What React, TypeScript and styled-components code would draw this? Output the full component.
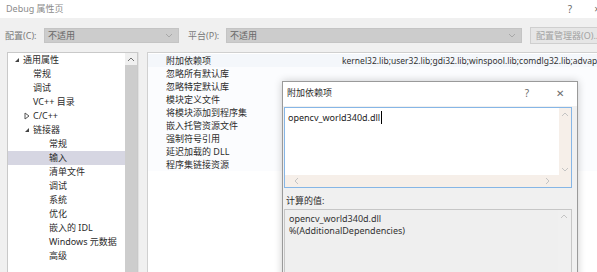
import React from 'react';
import styled, { createGlobalStyle } from 'styled-components';

const GlobalStyle = createGlobalStyle`
  html, body { margin: 0; padding: 0; overflow: hidden; background: #f0f0f0; }
  body { font-family: "Noto Sans", "Noto Sans CJK SC", sans-serif; }
`;

const Window = styled.div`
  position: relative;
  width: 597px;
  height: 272px;
  overflow: hidden;
  background: #f0f0f0;
  display: flex;
  flex-direction: column;
`;

const TitleBar = styled.div`
  height: 18px;
  flex: none;
  display: flex;
  align-items: center;
  background: #ffffff;
  padding-left: 6px;
  margin-right: -13px;
  font-size: 9px;
  line-height: 12px;
  color: #8c8c8c;
`;

const TitleText = styled.span`
  flex: 1;
  min-width: 0;
  white-space: nowrap;
`;

const TitleBtn = styled.span<{ $w: number }>`
  width: ${p => p.$w}px;
  flex: none;
  text-align: center;
  font-size: 10px;
  color: #6b6b6b;
`;

const ConfigRow = styled.div`
  margin-top: 10px;
  height: 15px;
  flex: none;
  display: flex;
  align-items: center;
  padding-left: 5px;
`;

const FieldLabel = styled.span<{ $w: number }>`
  width: ${p => p.$w}px;
  flex: none;
  font-size: 9px;
  line-height: 12px;
  color: #7a7a7a;
  white-space: nowrap;
`;

const Combo = styled.div<{ $w: number; $gap: number }>`
  width: ${p => p.$w}px;
  margin-right: ${p => p.$gap}px;
  height: 15px;
  flex: none;
  box-sizing: border-box;
  background: #cccccc;
  border: 1px solid #c4c4c4;
  display: flex;
  align-items: center;
  padding: 0 5px 0 3px;
  font-size: 9px;
  line-height: 12px;
  color: #666666;
  justify-content: space-between;
`;

const ManagerBtn = styled.div`
  flex: none;
  width: 80px;
  height: 17px;
  box-sizing: border-box;
  border: 1px solid #cfcfcf;
  background: #e6e6e6;
  font-size: 9px;
  line-height: 12px;
  color: #a2a2a2;
  display: flex;
  align-items: center;
  padding-left: 5px;
  white-space: nowrap;
`;

const Main = styled.div`
  flex: 1;
  display: flex;
  margin-top: 9px;
  padding-left: 7px;
  min-height: 0;
`;

const TreePanel = styled.div`
  width: 131px;
  flex: none;
  box-sizing: border-box;
  border: 1px solid #c9c9c9;
  border-bottom: none;
  background: #ffffff;
  display: flex;
`;

const TreeList = styled.div`
  flex: 1;
  min-width: 0;
  overflow: hidden;
  display: flex;
  flex-direction: column;
`;

const TreeRow = styled.div<{ $indent: number; $selected?: boolean }>`
  height: 14px;
  flex: none;
  display: flex;
  align-items: center;
  padding-left: ${p => p.$indent}px;
  background: ${p => (p.$selected ? '#d6d6e2' : 'transparent')};
  font-size: 9px;
  line-height: 14px;
  color: #2b2b2b;
  white-space: nowrap;
`;

const Arrow = styled.span`
  width: 8px;
  display: inline-flex;
  align-items: center;
  margin-left: -9px;
  margin-right: 1px;
`;

const VScroll = styled.div<{ $track: string }>`
  width: 12px;
  flex: none;
  display: flex;
  flex-direction: column;
  background: ${p => p.$track};
`;

const ScrollBtn = styled.div`
  height: 12px;
  flex: none;
  display: flex;
  align-items: center;
  justify-content: center;
`;

const Thumb = styled.div`
  flex: 1;
  background: #cdcdcd;
`;

const ScrollFill = styled.div`
  flex: 1;
`;

const Gap = styled.div`
  width: 9px;
  flex: none;
  border-left: 1px solid #e2e2e2;
  box-sizing: border-box;
`;

const PropPanel = styled.div`
  flex: 1;
  box-sizing: border-box;
  border: 1px solid #d0d0d0;
  border-bottom: none;
  border-right: none;
  background: #ffffff;
  padding-top: 1px;
`;

const PropRow = styled.div<{ $tint?: boolean }>`
  height: 13px;
  display: grid;
  grid-template-columns: 194px 1fr;
  align-items: center;
  background: ${p => (p.$tint ? '#f4f7fb' : '#fbfcfe')};
`;

const PropName = styled.span`
  padding-left: 18px;
  font-size: 9px;
  line-height: 13px;
  color: #2b2b2b;
  white-space: nowrap;
`;

const PropValue = styled.span`
  font-size: 8.5px;
  line-height: 13px;
  color: #333;
  white-space: nowrap;
  overflow: hidden;
`;

const Dialog = styled.div`
  position: absolute;
  left: 282px;
  top: 81px;
  width: 296px;
  height: 210px;
  box-sizing: border-box;
  border: 1px solid #9a9a9a;
  background: #f0f0f0;
  box-shadow: 0 0 8px rgba(0, 0, 0, 0.2);
  display: flex;
  flex-direction: column;
`;

const DialogTitle = styled.div`
  height: 24px;
  flex: none;
  display: flex;
  align-items: center;
  background: #ffffff;
  padding-left: 4px;
  padding-bottom: 2px;
  box-sizing: border-box;
  font-size: 9px;
  line-height: 12px;
  color: #2b2b2b;
`;

const DialogBody = styled.div`
  padding: 1px 5px 0 1px;
  display: flex;
  flex-direction: column;
`;

const EditBox = styled.div`
  height: 81px;
  box-sizing: border-box;
  border: 1px solid #86b6e6;
  background: #ffffff;
  display: grid;
  grid-template-columns: 1fr 12px;
  grid-template-rows: 1fr 12px;
`;

const EditText = styled.div`
  padding: 3px 0 0 3px;
  font-size: 9px;
  color: #222;
  display: flex;
  align-items: flex-start;
  line-height: 13px;
`;

const Caret = styled.span`
  display: inline-block;
  width: 1px;
  height: 13px;
  background: #000;
  margin-left: 1px;
`;

const HScroll = styled.div`
  display: flex;
  align-items: center;
  justify-content: space-between;
  padding: 0 8px;
  background: #f6efe9;
`;

const Corner = styled.div`
  background: #f6efe9;
`;

const SectionLabel = styled.div`
  margin-top: 6px;
  height: 14px;
  padding-left: 2px;
  font-size: 9px;
  line-height: 14px;
  color: #2b2b2b;
`;

const ComputedBox = styled.div`
  margin-top: 1px;
  height: 80px;
  box-sizing: border-box;
  border: 1px solid #c6c6c6;
  background: #efefef;
  display: grid;
  grid-template-columns: 1fr 13px;
`;

const ComputedText = styled.div`
  padding: 3px 0 0 4px;
  font-size: 9px;
  line-height: 12px;
  color: #333;
`;

const Chevron = ({ dir, color = '#9a9a9a' }: { dir: 'up' | 'down' | 'left' | 'right'; color?: string }) => {
  const d = {
    up: 'M1 5 L4 2 L7 5',
    down: 'M1 2 L4 5 L7 2',
    left: 'M5 1 L2 4 L5 7',
    right: 'M2 1 L5 4 L2 7',
  }[dir];
  const w = dir === 'up' || dir === 'down' ? 8 : 7;
  const h = dir === 'up' || dir === 'down' ? 7 : 8;
  return (
    <svg width={w} height={h} viewBox={`0 0 ${w} ${h}`}>
      <path d={d} fill="none" stroke={color} strokeWidth="1" />
    </svg>
  );
};

const Expanded = () => (
  <svg width="6" height="6" viewBox="0 0 6 6">
    <path d="M5 1 L5 5 L1 5 Z" fill="#444" />
  </svg>
);

const Collapsed = () => (
  <svg width="6" height="8" viewBox="0 0 6 8">
    <path d="M1 1 L5 4 L1 7 Z" fill="none" stroke="#555" strokeWidth="1" />
  </svg>
);

type TreeItem = { label: string; indent: number; arrow?: 'open' | 'closed'; selected?: boolean };

const treeItems: TreeItem[] = [
  { label: '通用属性', indent: 15, arrow: 'open' },
  { label: '常规', indent: 25 },
  { label: '调试', indent: 25 },
  { label: 'VC++ 目录', indent: 25 },
  { label: 'C/C++', indent: 25, arrow: 'closed' },
  { label: '链接器', indent: 25, arrow: 'open' },
  { label: '常规', indent: 41 },
  { label: '输入', indent: 41, selected: true },
  { label: '清单文件', indent: 41 },
  { label: '调试', indent: 41 },
  { label: '系统', indent: 41 },
  { label: '优化', indent: 41 },
  { label: '嵌入的 IDL', indent: 41 },
  { label: 'Windows 元数据', indent: 41 },
  { label: '高级', indent: 41 },
];

const props = [
  '附加依赖项',
  '忽略所有默认库',
  '忽略特定默认库',
  '模块定义文件',
  '将模块添加到程序集',
  '嵌入托管资源文件',
  '强制符号引用',
  '延迟加载的 DLL',
  '程序集链接资源',
];

export default function App() {
  return (
    <Window>
      <GlobalStyle />
      <TitleBar>
        <TitleText>Debug 属性页</TitleText>
        <TitleBtn $w={28}>?</TitleBtn>
        <TitleBtn $w={26}>×</TitleBtn>
      </TitleBar>

      <ConfigRow>
        <FieldLabel $w={39}>配置(C):</FieldLabel>
        <Combo $w={135} $gap={9}>
          <span>不适用</span>
          <Chevron dir="down" color="#a8a8a8" />
        </Combo>
        <FieldLabel $w={38}>平台(P):</FieldLabel>
        <Combo $w={296} $gap={8}>
          <span>不适用</span>
          <Chevron dir="down" color="#a8a8a8" />
        </Combo>
        <ManagerBtn>配置管理器(O)...</ManagerBtn>
      </ConfigRow>

      <Main>
        <TreePanel>
          <TreeList>
            {treeItems.map((t, i) => (
              <TreeRow key={i} $indent={t.indent} $selected={t.selected}>
                {t.arrow && <Arrow>{t.arrow === 'open' ? <Expanded /> : <Collapsed />}</Arrow>}
                {t.label}
              </TreeRow>
            ))}
          </TreeList>
          <VScroll $track="#f0f0f0">
            <ScrollBtn>
              <Chevron dir="up" color="#707070" />
            </ScrollBtn>
            <Thumb />
          </VScroll>
        </TreePanel>
        <Gap />
        <PropPanel>
          {props.map((p, i) => (
            <PropRow key={p} $tint={i === 0}>
              <PropName>{p}</PropName>
              <PropValue>
                {i === 0 ? 'kernel32.lib;user32.lib;gdi32.lib;winspool.lib;comdlg32.lib;advapi32.lib;shell32.lib' : ''}
              </PropValue>
            </PropRow>
          ))}
        </PropPanel>
      </Main>

      <Dialog>
        <DialogTitle>
          <TitleText>附加依赖项</TitleText>
          <TitleBtn $w={32}>?</TitleBtn>
          <TitleBtn $w={34}>✕</TitleBtn>
        </DialogTitle>
        <DialogBody>
          <EditBox>
            <EditText>
              opencv_world340d.dll
              <Caret />
            </EditText>
            <VScroll $track="#f6efe9">
              <ScrollBtn>
                <Chevron dir="up" color="#c4c4c4" />
              </ScrollBtn>
              <ScrollFill />
              <ScrollBtn>
                <Chevron dir="down" color="#c4c4c4" />
              </ScrollBtn>
            </VScroll>
            <HScroll>
              <Chevron dir="left" color="#c4c4c4" />
              <Chevron dir="right" color="#c4c4c4" />
            </HScroll>
            <Corner />
          </EditBox>
          <SectionLabel>计算的值:</SectionLabel>
          <ComputedBox>
            <ComputedText>
              opencv_world340d.dll
              <br />
              %(AdditionalDependencies)
            </ComputedText>
            <VScroll $track="#f0f0f0">
              <ScrollBtn>
                <Chevron dir="up" color="#c4c4c4" />
              </ScrollBtn>
            </VScroll>
          </ComputedBox>
        </DialogBody>
      </Dialog>
    </Window>
  );
}
